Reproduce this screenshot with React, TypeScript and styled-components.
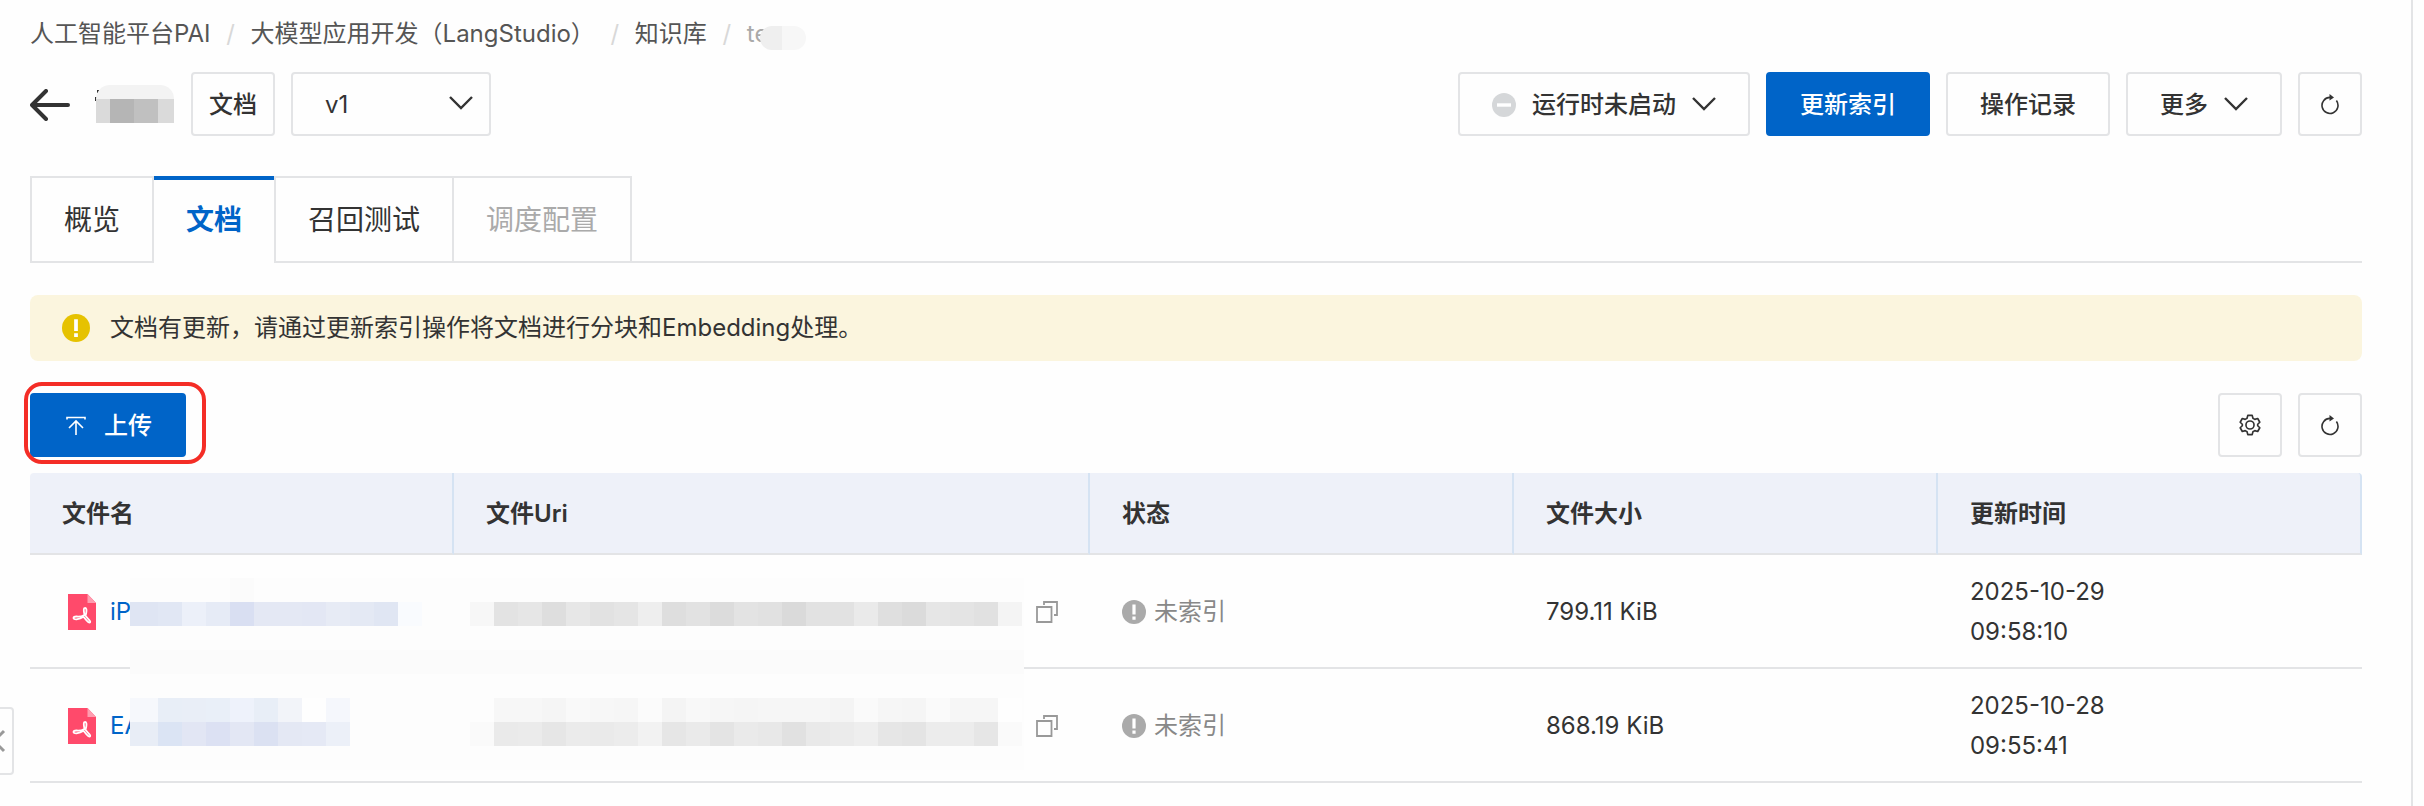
import React from 'react';
import styled, { createGlobalStyle, css } from 'styled-components';

const GlobalStyle = createGlobalStyle`
  * { box-sizing: border-box; }
  body {
    margin: 0;
    background: #fefefe;
    color: #333;
    font-family: Inter, "Noto Sans CJK SC", sans-serif;
    font-size: 24px;
    line-height: 40px;
  }
  button, select { font: inherit; color: inherit; }
  svg { display: block; flex: none; }
`;

const Page = styled.div`
  position: relative;
  min-height: 100vh;
  margin-right: 11px;
  padding: 14px 49px 22px 30px;
  border-right: 2px solid #e3e4e6;
`;

const Breadcrumb = styled.nav`
  ol { display: flex; margin: 0; padding: 0; list-style: none; }
  li { display: flex; align-items: center; }
  li + li::before { content: "/"; width: 40px; text-align: center; color: #d8d8d8; }
`;

const Crumb = styled.a`
  color: #555;
  text-decoration: none;
`;

const CurrentCrumb = styled.span`
  display: flex;
  align-items: center;
  color: #aaa;
  svg { margin: 8px 0 0 -8px; }
`;

const Header = styled.header`
  display: flex;
  align-items: center;
  gap: 16px;
  margin-top: 18px;
`;

const BackButton = styled.button`
  padding: 2px 0 0;
  border: 0;
  background: none;
`;

const Title = styled.h1`
  margin: 0;
  line-height: 0;
`;

const Actions = styled.div`
  display: flex;
  gap: 16px;
  margin-left: auto;
`;

const Button = styled.button<{ $primary?: boolean; $square?: boolean; $tight?: boolean }>`
  display: flex;
  align-items: center;
  justify-content: center;
  gap: 16px;
  height: 64px;
  padding: 2px ${(p) => (p.$tight ? 16 : 32)}px 0;
  border: 2px solid #e3e4e6;
  border-radius: 4px;
  background: #fefefe;
  font-weight: 500;
  white-space: nowrap;
  ${(p) => p.$square && css`width: 64px; padding: 0;`}
  ${(p) => p.$primary && css`border-color: #0064c8; background: #0064c8; color: #fff;`}
`;

const SelectBox = styled.label`
  display: grid;
  align-items: center;
  width: 200px;
  select, svg { grid-area: 1 / 1; }
  svg { justify-self: end; margin-right: 18px; pointer-events: none; }
`;

const Select = styled.select`
  appearance: none;
  height: 64px;
  padding: 2px 32px 0;
  border: 2px solid #e3e4e6;
  border-radius: 4px;
  background: #fefefe;
`;

const Tabs = styled.div`
  display: flex;
  margin-top: 40px;
  font-size: 28px;
  &::after { content: ""; flex: 1; border-bottom: 2px solid #e3e4e6; }
`;

const Tab = styled.button<{ $active?: boolean }>`
  height: 87px;
  padding: 0 32px;
  border: 2px solid #e3e4e6;
  border-left-width: 0;
  background: #fefefe;
  &:first-child { border-left-width: 2px; }
  &:disabled { color: #aaa; }
  ${(p) => p.$active && css`
    border-width: 0 2px 0 0;
    box-shadow: inset 0 4px #0064c8;
    color: #0064c8;
    font-weight: 600;
  `}
`;

const Notice = styled.div`
  display: flex;
  align-items: center;
  gap: 20px;
  height: 66px;
  margin-top: 32px;
  padding: 0 32px;
  border-radius: 8px;
  background: #fbf5de;
`;

const Toolbar = styled.div`
  display: flex;
  align-items: center;
  gap: 16px;
  margin: 32px 0 16px;
`;

const Highlight = styled.div`
  position: relative;
  margin-right: auto;
  &::after {
    content: "";
    position: absolute;
    inset: -11px -20px -7px -6px;
    border: 4px solid #f42d26;
    border-radius: 18px;
    pointer-events: none;
  }
`;

const TableArea = styled.div`
  position: relative;
`;

const Table = styled.table`
  width: 100%;
  table-layout: fixed;
  border-collapse: separate;
  border-spacing: 0;
  th, td { padding: 17px 32px 15px; border-bottom: 2px solid #e3e4e6; text-align: left; }
  th { height: 82px; border-right: 2px solid #d5e3f3; background: #eef1f9; font-weight: 600; }
  th:first-child { border-top-left-radius: 4px; }
  th:last-child { border-top-right-radius: 4px; }
`;

const Inline = styled.div<{ $muted?: boolean; $end?: boolean }>`
  display: flex;
  align-items: center;
  justify-content: ${(p) => (p.$end ? 'flex-end' : 'flex-start')};
  gap: 8px;
  color: ${(p) => (p.$muted ? '#888' : 'inherit')};
`;

const FileLink = styled.a`
  display: flex;
  align-items: center;
  gap: 14px;
  padding-left: 6px;
  color: #0064c8;
  text-decoration: none;
`;

const IconButton = styled.button`
  padding: 0;
  border: 0;
  background: none;
`;

const Stamp = styled.time`
  display: block;
  width: 150px;
`;

const Mask = styled.svg`
  position: absolute;
  top: 105px;
  left: 100px;
`;

const Handle = styled.button`
  position: absolute;
  top: 707px;
  left: -2px;
  width: 16px;
  height: 68px;
  padding: 0;
  border: 2px solid #e3e4e6;
  border-radius: 0 4px 4px 0;
  background: #fefefe;
`;

const Chevron = () => (
  <svg width="24" height="24" viewBox="0 0 24 24" fill="none" stroke="#333" strokeWidth="2.4">
    <path d="M1 5l11 11L23 5" />
  </svg>
);

const ArrowLeft = () => (
  <svg width="40" height="32" viewBox="0 0 40 32" fill="none" stroke="#333" strokeWidth="4" strokeLinecap="round" strokeLinejoin="round">
    <path d="M38 16H3M16 2L2 16l14 14" />
  </svg>
);

const RefreshIcon = () => (
  <svg width="20" height="22" viewBox="0 0 20 22" fill="none" stroke="#333" strokeWidth="1.6">
    <path d="M10 4.4a8 8 0 1 0 6.4 3.2" />
    <path d="M9.5 1l4.5 3.4-4.5 3.2z" fill="#333" stroke="none" />
  </svg>
);

const GearIcon = () => (
  <svg width="22" height="22" viewBox="0 0 24 24" fill="none" stroke="#333" strokeWidth="1.8" strokeLinejoin="round">
    <path d="M9.6 1.5h4.8l.8 3.2 2 1.2 3.2-1 2.3 4.1-2.3 2.2v1.6l2.3 2.2-2.3 4.1-3.2-1-2 1.2-.8 3.2H9.6l-.8-3.2-2-1.2-3.2 1L1.3 15l2.3-2.2v-1.6L1.3 9l2.3-4.1 3.2 1 2-1.2z" />
    <circle cx="12" cy="12" r="4.4" />
  </svg>
);

const UploadIcon = () => (
  <svg width="24" height="20" viewBox="-2 0 24 20" fill="none" stroke="#fff" strokeWidth="1.6">
    <path d="M1 3.5V1.5h18v2M10 19V5M3 12l7-7 7 7" />
  </svg>
);

const PausedIcon = () => (
  <svg width="24" height="24" viewBox="0 0 24 24">
    <circle cx="12" cy="12" r="12" fill="#d5d7d9" />
    <path d="M5 12h14" stroke="#fff" strokeWidth="3.4" />
  </svg>
);

const AlertIcon = ({ size, color }: { size: number; color: string }) => (
  <svg width={size} height={size} viewBox="0 0 24 24">
    <circle cx="12" cy="12" r="12" fill={color} />
    <path d="M10.4 4.5h3.2v10h-3.2zM10.4 16.5h3.2v3.2h-3.2z" fill="#fff" />
  </svg>
);

const PdfIcon = () => (
  <svg width="28" height="36" viewBox="0 0 28 36">
    <path d="M0 0h19.5L28 9v27H0z" fill="#ff4a6b" />
    <path d="M19.5 0L28 9h-8.5z" fill="#ff9db0" />
    <path d="M17 14c-2 0-1 4.5-.5 7 0 0-4 2-8 1.5-4-.2-4 3 0 2.8 4-.6 7-2.5 7-2.5s3 4 5 5.5c1.5 1 2.5-.5 1-2-2-2-4-4.5-4-4.5s2.5-8-.5-7.800z" fill="none" stroke="#fff" strokeWidth="1.8" strokeLinejoin="round" />
  </svg>
);

const CopyIcon = () => (
  <svg width="22" height="22" viewBox="0 0 22 22" fill="none" stroke="#999" strokeWidth="1.8">
    <path d="M1 6h14.5v15H1zM8 4V1h13v13h-3" />
  </svg>
);

const CELL = 24;
const hex = (s: string) => s.split(' ').map((v) => '#' + (v.length === 2 ? v.repeat(3) : v));

const maskStrips = [
  { x: 0, y: 24, fills: hex('dfe5f3 e1e7f4 ecf0f9 e6ebf6 d9dff2 e4e8f4 e4e8f4 e3e7f4 e7ebf5 e4e9f4 e0e6f3 f9fbfe') },
  { x: 340, y: 24, fills: hex('f7 e3 e6 de e7 e2 e5 ee de e2 dc e3 e1 da e2 e2 ea df db e6 e4 e1 f4') },
  { x: 0, y: 120, fills: hex('f6f8fc e8eef7 e9eef7 e9eff8 eef2fb e8eef7 f2f4f9 fefefe f5f7fc') },
  { x: 0, y: 144, fills: hex('e8edf6 dbe4f4 e2e6f4 dce1f3 e3e7f4 dbe1f2 e4e8f4 e5e9f5 ecf0f8') },
  { x: 340, y: 120, fills: hex('fd f7 f7 f5 f9 f7 f6 fb f4 f8 f6 f5 f6 f6 f6 f4 fa f6 f5 fa f6 f6 fe') },
  { x: 340, y: 144, fills: hex('fa ea eb e6 eb ea ec f2 e6 ea e4 ea e8 e1 e9 eb ee e6 e4 ec ec e6 fa') },
];

const ContentMask = () => (
  <Mask width="894" height="192" viewBox="0 0 894 192" shapeRendering="crispEdges" aria-hidden="true">
    <rect width="894" height="192" fill="#fdfdfd" />
    <rect x="100" width="24" height="24" fill="#fbfbfb" />
    <rect y="72" width="894" height="24" fill="#fbfbfb" />
    {maskStrips.map((strip) =>
      strip.fills.map((fill, i) => {
        const lead = strip.x === 0 ? 4 : 0;
        const x = strip.x + (i === 0 ? 0 : i * CELL + lead);
        const width = i === 0 ? CELL + lead : CELL;
        return <rect key={`${strip.x}-${strip.y}-${i}`} x={x} y={strip.y} width={width} height={CELL} fill={fill} />;
      }),
    )}
  </Mask>
);

const files = [
  { name: 'iP', size: '799.11 KiB', date: '2025-10-29', time: '09:58:10' },
  { name: 'EA', size: '868.19 KiB', date: '2025-10-28', time: '09:55:41' },
];

export default function App() {
  return (
    <>
      <GlobalStyle />
      <Page>
        <Breadcrumb aria-label="breadcrumb">
          <ol>
            <li><Crumb href="#">人工智能平台PAI</Crumb></li>
            <li><Crumb href="#">大模型应用开发（LangStudio）</Crumb></li>
            <li><Crumb href="#">知识库</Crumb></li>
            <li>
              <CurrentCrumb>
                te
                <svg width="46" height="24" viewBox="0 0 46 24">
                  <path d="M12 0h10v24H12A12 12 0 0 1 12 0z" fill="#efefef" />
                  <path d="M22 0h12a12 12 0 0 1 0 24H22z" fill="#f7f7f7" />
                </svg>
              </CurrentCrumb>
            </li>
          </ol>
        </Breadcrumb>

        <Header>
          <BackButton aria-label="返回"><ArrowLeft /></BackButton>
          <Title>
            <svg width="89" height="38" viewBox="0 0 89 38">
              <path d="M11 5h2v3h-2zM9 12h3v4H9z" fill="#333" />
              <path d="M24 0H74A14 14 0 0 1 88 14V38H10V14A14 14 0 0 1 24 0z" fill="#f3f3f3" />
              <path d="M10 14h14v24H10z" fill="#dadada" />
              <path d="M24 14h24v24H24z" fill="#b5b5b5" />
              <path d="M48 14h24v24H48z" fill="#c0c0c0" />
              <path d="M72 14h16v24H72z" fill="#dadada" />
            </svg>
          </Title>
          <Button $tight>文档</Button>
          <SelectBox>
            <Select aria-label="版本"><option>v1</option></Select>
            <Chevron />
          </SelectBox>
          <Actions>
            <Button><PausedIcon />运行时未启动<Chevron /></Button>
            <Button $primary>更新索引</Button>
            <Button>操作记录</Button>
            <Button>更多<Chevron /></Button>
            <Button $square aria-label="刷新"><RefreshIcon /></Button>
          </Actions>
        </Header>

        <Tabs role="tablist">
          <Tab role="tab">概览</Tab>
          <Tab role="tab" $active aria-selected="true">文档</Tab>
          <Tab role="tab">召回测试</Tab>
          <Tab role="tab" disabled>调度配置</Tab>
        </Tabs>

        <Notice role="status">
          <AlertIcon size={28} color="#e6c200" />
          文档有更新，请通过更新索引操作将文档进行分块和Embedding处理。
        </Notice>

        <Toolbar>
          <Highlight>
            <Button $primary><UploadIcon />上传</Button>
          </Highlight>
          <Button $square aria-label="设置"><GearIcon /></Button>
          <Button $square aria-label="刷新列表"><RefreshIcon /></Button>
        </Toolbar>

        <TableArea>
          <Table>
            <colgroup>
              <col width="18.1818%" />
              <col width="27.2727%" />
              <col width="18.1818%" />
              <col width="18.1818%" />
              <col width="18.1818%" />
            </colgroup>
            <thead>
              <tr>
                <th>文件名</th>
                <th>文件Uri</th>
                <th>状态</th>
                <th>文件大小</th>
                <th>更新时间</th>
              </tr>
            </thead>
            <tbody>
              {files.map((file) => (
                <tr key={file.name}>
                  <td><FileLink href="#"><PdfIcon />{file.name}</FileLink></td>
                  <td>
                    <Inline $end>
                      <IconButton aria-label="复制"><CopyIcon /></IconButton>
                    </Inline>
                  </td>
                  <td><Inline $muted><AlertIcon size={24} color="#aaa" />未索引</Inline></td>
                  <td>{file.size}</td>
                  <td><Stamp>{file.date} {file.time}</Stamp></td>
                </tr>
              ))}
            </tbody>
          </Table>
          <ContentMask />
        </TableArea>

        <Handle aria-label="展开侧栏">
          <svg width="12" height="28" viewBox="0 0 12 28" fill="none" stroke="#999" strokeWidth="3">
            <path d="M4 4L-6 14L4 24" />
          </svg>
        </Handle>
      </Page>
    </>
  );
}
